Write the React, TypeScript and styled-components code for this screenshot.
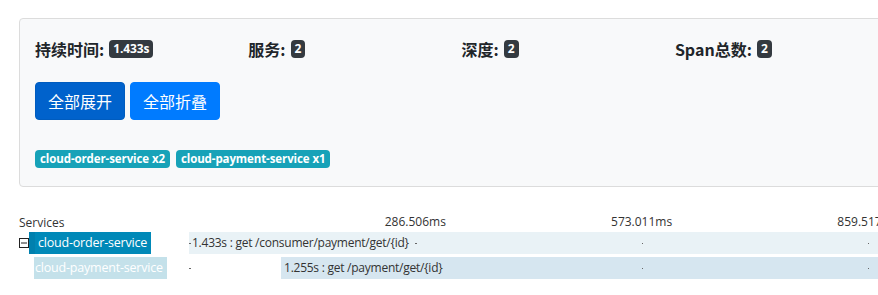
import React from "react";
import styled, { createGlobalStyle } from "styled-components";

const GlobalStyle = createGlobalStyle`
  html, body {
    margin: 0;
    padding: 0;
    background: #fff;
    overflow: hidden;
  }
  body {
    font-family: "Noto Sans", "Noto Sans CJK SC", sans-serif;
    color: #212529;
  }
`;

const Page = styled.div`
  padding: 18px 0 0 19px;
  width: 1400px;
`;

const Card = styled.div`
  box-sizing: border-box;
  width: 884px;
  background: #f8f9fa;
  border: 1px solid #dcdcdc;
  border-radius: 4px;
  padding: 19px 15px 18px 15px;
`;

const StatsRow = styled.div`
  display: grid;
  grid-template-columns: repeat(4, 213.3px);
  height: 22px;
  align-items: center;
  margin-bottom: 22px;
`;

const Stat = styled.div`
  font-family: "Noto Sans CJK SC", sans-serif;
  font-weight: 700;
  font-size: 16px;
  line-height: 22px;
  color: #212529;
  display: flex;
  align-items: center;
  white-space: nowrap;
`;

const Badge = styled.span<{ $tone: "dark" | "info" }>`
  display: inline-block;
  font-family: "Open Sans", "Noto Sans", sans-serif;
  font-weight: 700;
  font-size: 11.5px;
  line-height: 1;
  color: #fff;
  background: ${(p) => (p.$tone === "dark" ? "#343a40" : "#17a2b8")};
  border-radius: 4px;
  padding: 3px 5px;
  white-space: nowrap;
  letter-spacing: -0.1px;
`;

const StatBadge = styled(Badge)`
  margin-left: 5px;
  padding: 3px 4px;
  font-size: 12px;
`;

const ButtonRow = styled.div`
  display: flex;
  gap: 5px;
  margin-bottom: 30px;
`;

const Button = styled.button<{ $active?: boolean }>`
  font-family: "Noto Sans CJK SC", sans-serif;
  font-size: 16px;
  line-height: 24px;
  color: #fff;
  background: ${(p) => (p.$active ? "#0062cc" : "#007bff")};
  border: 1px solid ${(p) => (p.$active ? "#005cbf" : "#007bff")};
  border-radius: 4px;
  padding: 6px 12px;
  cursor: pointer;
`;

const TagRow = styled.div`
  display: flex;
  gap: 6px;
`;

const Timeline = styled.div`
  margin-top: 27px;
  font-family: "Open Sans", "Noto Sans", sans-serif;
  font-size: 12px;
  color: #333;
`;

const Row = styled.div<{ $gap?: number }>`
  display: grid;
  grid-template-columns: 170px 1fr;
  height: 22px;
  align-items: center;
  margin-bottom: ${(p) => p.$gap ?? 3}px;
`;

const HeaderRow = styled(Row)`
  height: 16px;
  margin-bottom: 2px;
`;

const ServiceCell = styled.div<{ $indent: number }>`
  display: flex;
  align-items: center;
  height: 100%;
  padding-left: ${(p) => p.$indent}px;
`;

const Toggle = styled.svg`
  width: 10px;
  height: 10px;
  flex: none;
`;

const ServiceLabel = styled.div<{ $primary?: boolean }>`
  height: 22px;
  line-height: 22px;
  font-size: 12.5px;
  letter-spacing: -0.2px;
  color: #fff;
  background: ${(p) => (p.$primary ? "#0089b8" : "#c4e1ea")};
  padding: ${(p) => (p.$primary ? "0 4px 0 9px" : "0 4px 0 1px")};
  white-space: nowrap;
  ${(p) => p.$primary && "box-shadow: inset 6px 0 0 #0080ae;"}
`;

const Track = styled.div`
  position: relative;
  height: 100%;
`;

const TickLabel = styled.span`
  position: absolute;
  top: 0;
  transform: translateX(-50%);
  white-space: nowrap;
  line-height: 16px;
`;

const Bar = styled.div<{ $tone: "root" | "child" }>`
  position: absolute;
  top: 0;
  bottom: 0;
  background: ${(p) => (p.$tone === "root" ? "#e9f2f6" : "#d6e6f0")};
  line-height: 22px;
  padding-left: 3px;
  letter-spacing: -0.25px;
  white-space: nowrap;
`;

const Dot = styled.span`
  position: absolute;
  top: 11px;
  width: 1.5px;
  height: 1.5px;
  background: #666;
`;

const PX_PER_MS = 226.3 / 286.506;
const ticks = [0, 286.506, 573.011, 859.517];

const spans = [
  { service: "cloud-order-service", start: 0, duration: 1433, text: "1.433s : get /consumer/payment/get/{id}", depth: 0 },
  { service: "cloud-payment-service", start: 116.5, duration: 1255, text: "1.255s : get /payment/get/{id}", depth: 1 },
];

export default function App() {
  return (
    <Page>
      <GlobalStyle />
      <Card>
        <StatsRow>
          <Stat>
            持续时间:<StatBadge $tone="dark">1.433s</StatBadge>
          </Stat>
          <Stat>
            服务:<StatBadge $tone="dark">2</StatBadge>
          </Stat>
          <Stat>
            深度:<StatBadge $tone="dark">2</StatBadge>
          </Stat>
          <Stat>
            Span总数:<StatBadge $tone="dark">2</StatBadge>
          </Stat>
        </StatsRow>
        <ButtonRow>
          <Button $active>全部展开</Button>
          <Button>全部折叠</Button>
        </ButtonRow>
        <TagRow>
          <Badge $tone="info">cloud-order-service x2</Badge>
          <Badge $tone="info">cloud-payment-service x1</Badge>
        </TagRow>
      </Card>

      <Timeline>
        <HeaderRow>
          <div>Services</div>
          <Track>
            {ticks.slice(1).map((t) => (
              <TickLabel key={t} style={{ left: t * PX_PER_MS }}>
                {t.toFixed(3)}ms
              </TickLabel>
            ))}
          </Track>
        </HeaderRow>
        {spans.map((s) => (
          <Row key={s.service}>
            <ServiceCell $indent={s.depth === 0 ? 0 : 15}>
              {s.depth === 0 && (
                <Toggle viewBox="0 0 10 10">
                  <rect x="0.5" y="0.5" width="9" height="9" fill="#fff" stroke="#222" strokeWidth="1" />
                  <line x1="2" y1="5" x2="8" y2="5" stroke="#222" strokeWidth="1" />
                </Toggle>
              )}
              <ServiceLabel $primary={s.depth === 0}>{s.service}</ServiceLabel>
            </ServiceCell>
            <Track>
              <Bar
                $tone={s.depth === 0 ? "root" : "child"}
                style={{ left: s.start * PX_PER_MS, width: s.duration * PX_PER_MS }}
              >
                {s.text}
              </Bar>
              {ticks.map((t) => (
                <Dot key={t} style={{ left: t * PX_PER_MS }} />
              ))}
            </Track>
          </Row>
        ))}
      </Timeline>
    </Page>
  );
}
